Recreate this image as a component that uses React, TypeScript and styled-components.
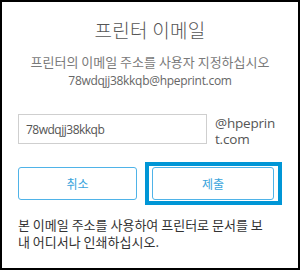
import React from "react";
import styled, { createGlobalStyle } from "styled-components";

const Global = createGlobalStyle`
  html, body { margin: 0; padding: 0; background: #fff; }
  body { font-family: "Noto Sans CJK KR", "Noto Sans", sans-serif; }
  * { box-sizing: border-box; }
`;

const Frame = styled.div`
  width: 300px;
  height: 270px;
  border: 2px solid #000;
  background: #fff;
  padding: 0 16px;
  display: flex;
  flex-direction: column;
`;

const Title = styled.h1`
  margin: 16px 0 0;
  font-size: 19px;
  line-height: 24px;
  font-weight: 300;
  color: #555;
  text-align: center;
  letter-spacing: 0.3px;
`;

const Sub = styled.p`
  margin: 11px 0 0;
  font-size: 13px;
  line-height: 18px;
  color: #7a7a7a;
  text-align: center;
`;

const Email = styled.p`
  margin: 1px 0 0;
  font-family: "Open Sans", "Noto Sans", sans-serif;
  font-size: 12px;
  line-height: 18px;
  color: #666;
  text-align: center;
  letter-spacing: -0.3px;
`;

const Row = styled.div`
  display: flex;
  gap: 8px;
  margin-top: 24px;
  align-items: flex-start;
`;

const Input = styled.div`
  width: 189px;
  height: 30px;
  border: 1px solid #cfcfcf;
  padding: 0 7px;
  display: flex;
  align-items: center;
  font-family: "Open Sans", "Noto Sans", sans-serif;
  font-size: 12px;
  color: #555;
  letter-spacing: -0.5px;
`;

const Domain = styled.div`
  width: 66px;
  margin-top: 1px;
  font-family: "Open Sans", "Noto Sans", sans-serif;
  font-size: 13.5px;
  line-height: 16px;
  color: #555;
  letter-spacing: -0.2px;
  word-break: break-all;
`;

const Buttons = styled.div`
  display: flex;
  align-items: center;
  gap: 8px;
  margin-top: 15px;
`;

const Ring = styled.div`
  border: 4px solid #0096d6;
  padding: 1px 4px 1px 3px;
  display: flex;
`;

const Button = styled.button`
  width: 122px;
  height: 33px;
  border: 1px solid #4fb3e8;
  border-radius: 3px;
  background: #fff;
  color: #3aa4dc;
  font-family: "Noto Sans CJK KR", sans-serif;
  font-size: 12px;
  padding: 0;
`;

const Note = styled.p`
  margin: 11px 8px 0 0;
  font-size: 13px;
  line-height: 17px;
  color: #333;
`;

export default function App() {
  return (
    <>
      <Global />
      <Frame>
        <Title>프린터 이메일</Title>
        <Sub>프린터의 이메일 주소를 사용자 지정하십시오</Sub>
        <Email>78wdqjj38kkqb@hpeprint.com</Email>
        <Row>
          <Input>78wdqjj38kkqb</Input>
          <Domain>@hpeprint.com</Domain>
        </Row>
        <Buttons>
          <Button>취소</Button>
          <Ring>
            <Button>제출</Button>
          </Ring>
        </Buttons>
        <Note>본 이메일 주소를 사용하여 프린터로 문서를 보내 어디서나 인쇄하십시오.</Note>
      </Frame>
    </>
  );
}
